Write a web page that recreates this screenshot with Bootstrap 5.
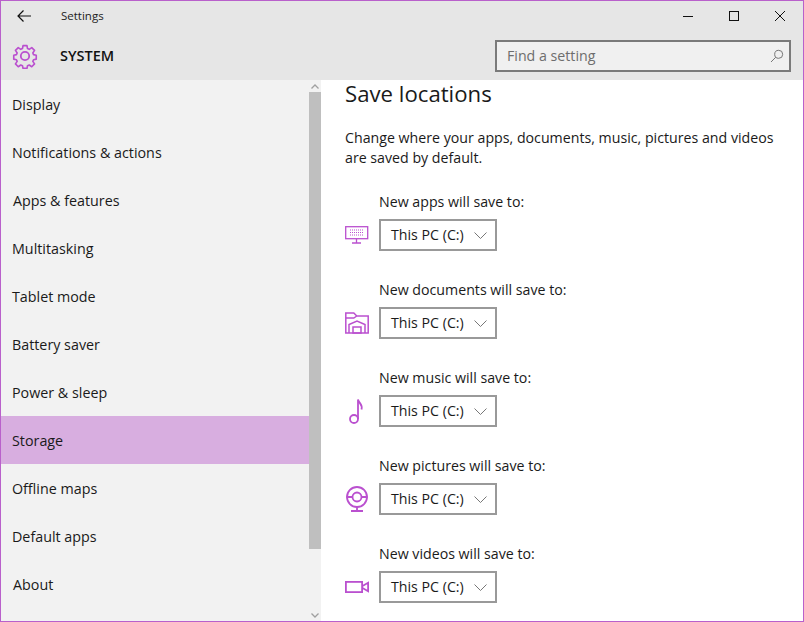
<!doctype html>
<html lang="en">
<head>
<meta charset="utf-8">
<title>Settings</title>
<link rel="stylesheet" href="https://cdn.jsdelivr.net/npm/bootstrap@5.3.0/dist/css/bootstrap.min.css">
<style>
html,body{height:100%;margin:0;overflow:hidden}
body{font-family:"Open Sans","Noto Sans","Liberation Sans",sans-serif;font-size:14.2px;color:#1a1a1a;background:#fff}
.win{width:804px;height:622px;border:1px solid #b960cb;display:flex;flex-direction:column;overflow:hidden}
.head{background:#e6e6e6;height:79px;flex:none;display:flex;flex-direction:column}
.tbar{height:30px;display:flex;align-items:center;flex:none}
.back{width:48px;padding-left:15px;display:flex}
.ttl{font-size:11.5px;margin-left:12px;color:#222}
.wbtns{margin-left:auto;display:flex}
.wbtn{width:46px;display:flex;justify-content:center;align-items:center;height:30px}
.hrow{display:flex;align-items:center;height:49px}
.gear{margin-left:11px;width:26px;height:26px;stroke:#ba50cf}
.sys{font-size:14.5px;font-weight:600;margin-left:22px;color:#111}
.srch{margin-left:auto;margin-right:12px;width:296px;height:32px;border:2px solid #7a7a7a;background:#f0f0f0;display:flex;align-items:center;padding:0 5px 0 10px;color:#6d6d6d;font-size:14.2px;justify-content:space-between}
.main{flex:1;display:flex;min-height:0}
.side{width:320px;flex:none;background:#f2f2f2;display:flex;font-size:14.3px}
.navl{flex:1}
.nitem{height:48px;display:flex;align-items:center;padding:1px 0 0 11px;color:#1a1a1a}
.nitem.nudge{padding-left:12px}
.nitem.sel{background:#d8aee0}
.sbar{width:12px;flex:none;display:flex;flex-direction:column;align-items:center}
.sarrow{height:12px;flex:none;display:flex;align-items:center;justify-content:center}
.thumb{width:12px;background:#bfbfbf;height:457px;flex:none}
.sgap{flex:1}
.cont{flex:1;padding:0 0 0 24px;background:#fff}
.h2t{font-size:22.2px;line-height:27px;margin:0;color:#1a1a1a;font-weight:400}
.para{margin:21px 0 0;line-height:20px;width:440px}
.locs{margin-top:24px;display:flex;flex-direction:column}
.loc{height:88px;padding-left:34px}
.lbl{line-height:20px}
.locrow{display:flex;align-items:center;margin-left:-34px;margin-top:7px}
.lico{width:34px;height:32px;display:flex;align-items:center;flex:none}
.lico svg{stroke:#ba50cf}
.dd{width:118px;height:32px;border:2px solid #999;display:flex;align-items:center;justify-content:space-between;padding:0 8px 0 10px;background:#fff;color:#1a1a1a}
</style>
</head>
<body>
<div class="win">
  <header class="head">
    <div class="tbar">
      <div class="back"><svg width="16" height="14" viewBox="0 0 16 14" fill="none" stroke="#111" stroke-width="1.2"><path d="M15 7H2M7.500 1.500 2 7l5.500 5.500"/></svg></div>
      <div class="ttl">Settings</div>
      <div class="wbtns">
        <div class="wbtn"><svg width="10" height="11"><path d="M0 5.500h10" stroke="#111" fill="none"/></svg></div>
        <div class="wbtn"><svg width="10" height="11"><rect x=".5" y=".5" width="9" height="9" stroke="#111" fill="none"/></svg></div>
        <div class="wbtn"><svg width="10" height="11"><path d="M0 0l10 10M10 0 0 10" stroke="#111" fill="none"/></svg></div>
      </div>
    </div>
    <div class="hrow">
      <svg class="gear" viewBox="0 0 26 26" fill="none" stroke-width="1.800" stroke-linejoin="round"><path d="M10.800 1.500h4.400l.6 3.300 1.900.8 2.800-1.900 3.100 3.100-1.900 2.800.8 1.900 3 .6v4.400l-3 .6-.8 1.900 1.900 2.800-3.100 3.100-2.800-1.900-1.900.8-.6 3h-4.400l-.6-3-1.900-.8-2.800 1.900-3.100-3.100 1.900-2.800-.8-1.900-3-.6v-4.400l3-.6.8-1.900-1.900-2.800 3.100-3.100 2.800 1.900 1.900-.8z" transform="translate(1.300 1.300) scale(.9)"/><circle cx="13" cy="13" r="4.200"/></svg>
      <div class="sys">SYSTEM</div>
      <div class="srch"><span>Find a setting</span><svg width="14" height="14" viewBox="0 0 14 14" fill="none" stroke="#777"><circle cx="8.700" cy="5.300" r="4"/><path d="M5.800 8.200 1 13"/></svg></div>
    </div>
  </header>
  <div class="main">
    <nav class="side">
      <div class="navl">
        <div class="nitem">Display</div>
        <div class="nitem">Notifications &amp; actions</div>
        <div class="nitem nudge">Apps &amp; features</div>
        <div class="nitem">Multitasking</div>
        <div class="nitem">Tablet mode</div>
        <div class="nitem">Battery saver</div>
        <div class="nitem">Power &amp; sleep</div>
        <div class="nitem sel">Storage</div>
        <div class="nitem">Offline maps</div>
        <div class="nitem">Default apps</div>
        <div class="nitem nudge">About</div>
      </div>
      <div class="sbar">
        <div class="sarrow"><svg width="8" height="5"><path d="M.5 4.500 4 1l3.500 3.500" stroke="#a0a0a0" stroke-width="1.300" fill="none"/></svg></div>
        <div class="thumb"></div>
        <div class="sgap"></div>
        <div class="sarrow"><svg width="8" height="5"><path d="M.5.500 4 4 7.500.5" stroke="#a0a0a0" stroke-width="1.300" fill="none"/></svg></div>
      </div>
    </nav>
    <main class="cont">
      <h2 class="h2t">Save locations</h2>
      <p class="para">Change where your apps, documents, music, pictures and videos are saved by default.</p>
      <div class="locs">
        <div class="loc">
          <div class="lbl">New apps will save to:</div>
          <div class="locrow">
            <div class="lico"><svg width="24" height="18" viewBox="0 0 24 18" fill="none" stroke-width="1.300"><rect x=".7" y=".7" width="22" height="12"/><path d="M11.500 13v3.500M7 17h9"/><path d="M5 4h13M5 6.500h13M5 9h13" stroke-width="1.200" stroke-dasharray="1 1"/></svg></div>
            <div class="dd"><span>This PC (C:)</span><svg width="13" height="7"><path d="M.5.500 6.500 6.500l6-6" stroke="#777" fill="none"/></svg></div>
          </div>
        </div>
        <div class="loc">
          <div class="lbl">New documents will save to:</div>
          <div class="locrow">
            <div class="lico"><svg width="24" height="22" viewBox="0 0 24 22" fill="none" stroke-width="1.500"><path d="M.8 21V1h8l3 3h11.400v17zM.8 6h8l3-2"/><path d="M4 21v-8.500l8-3.500 8 3.500V21"/><path d="M8 21v-6h8v6z"/></svg></div>
            <div class="dd"><span>This PC (C:)</span><svg width="13" height="7"><path d="M.5.500 6.500 6.500l6-6" stroke="#777" fill="none"/></svg></div>
          </div>
        </div>
        <div class="loc">
          <div class="lbl">New music will save to:</div>
          <div class="locrow">
            <div class="lico"><svg width="24" height="26" viewBox="0 0 24 26" fill="none" stroke-width="1.800"><circle cx="9" cy="21" r="4"/><path d="M13 21V1.500c1 4 5 5 3.500 10"/></svg></div>
            <div class="dd"><span>This PC (C:)</span><svg width="13" height="7"><path d="M.5.500 6.500 6.500l6-6" stroke="#777" fill="none"/></svg></div>
          </div>
        </div>
        <div class="loc">
          <div class="lbl">New pictures will save to:</div>
          <div class="locrow">
            <div class="lico"><svg width="24" height="26" viewBox="0 0 24 26" fill="none" stroke-width="1.800"><circle cx="12" cy="11" r="10"/><circle cx="12" cy="11" r="4.500"/><path d="M1.500 11h6M16.500 11h6M12 21v4M6 25h12"/></svg></div>
            <div class="dd"><span>This PC (C:)</span><svg width="13" height="7"><path d="M.5.500 6.500 6.500l6-6" stroke="#777" fill="none"/></svg></div>
          </div>
        </div>
        <div class="loc">
          <div class="lbl">New videos will save to:</div>
          <div class="locrow">
            <div class="lico"><svg width="24" height="12" viewBox="0 0 24 12" fill="none" stroke-width="1.800"><rect x=".9" y=".9" width="16.200" height="10.200"/><path d="M17.500 5 23.100 1.800v8.400L17.500 7"/></svg></div>
            <div class="dd"><span>This PC (C:)</span><svg width="13" height="7"><path d="M.5.500 6.500 6.500l6-6" stroke="#777" fill="none"/></svg></div>
          </div>
        </div>
      </div>
    </main>
  </div>
</div>
<script src="https://cdn.jsdelivr.net/npm/bootstrap@5.3.0/dist/js/bootstrap.bundle.min.js"></script>
</body>
</html>
